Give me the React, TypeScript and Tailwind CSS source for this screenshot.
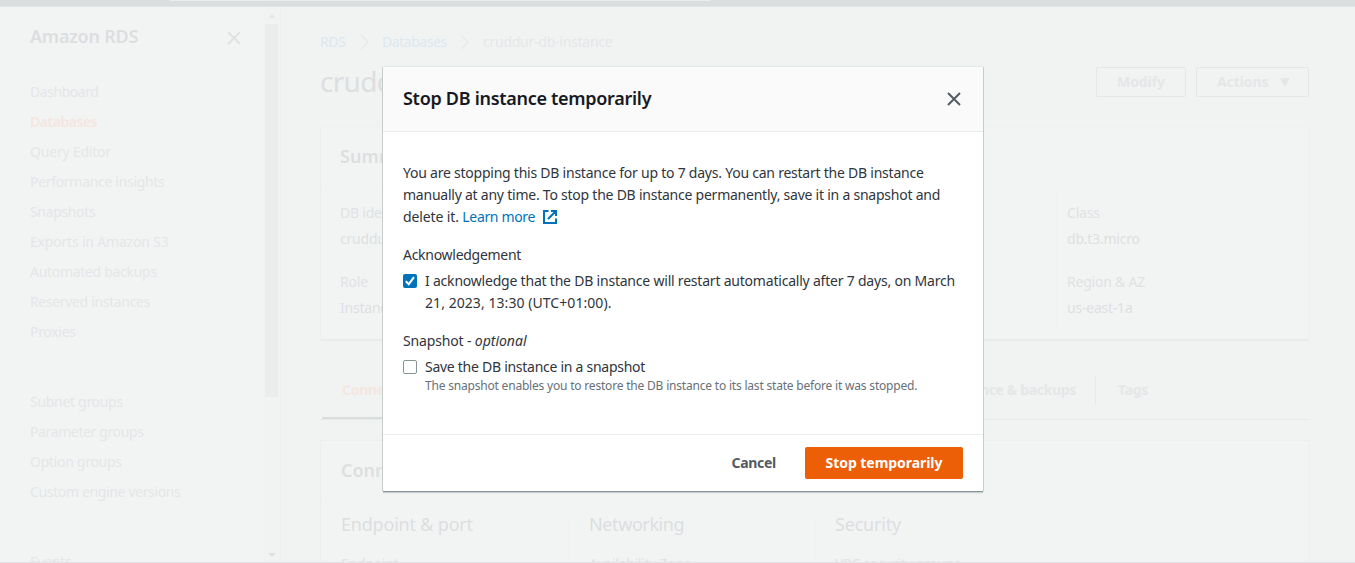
import React from "react";

const NAV_PRIMARY = [
  { label: "Dashboard", className: "tracking-[-0.44px]" },
  { label: "Databases", className: "font-semibold tracking-[-0.45px] text-[#f5e6df]" },
  { label: "Query Editor", className: "tracking-[-0.2px]" },
  { label: "Performance insights", className: "tracking-[-0.31px]" },
  { label: "Snapshots", className: "tracking-[-0.35px]" },
  { label: "Exports in Amazon S3", className: "tracking-[-0.19px]" },
  { label: "Automated backups", className: "tracking-[-0.3px]" },
  { label: "Reserved instances", className: "tracking-[-0.34px]" },
  { label: "Proxies", className: "tracking-[-0.3px]" },
];

const NAV_SECONDARY = [
  { label: "Subnet groups", className: "tracking-[-0.3px]" },
  { label: "Parameter groups", className: "tracking-[-0.38px]" },
  { label: "Option groups", className: "tracking-[-0.3px]" },
  { label: "Custom engine versions", className: "tracking-[-0.36px]" },
];

type NavEntry = { label: string; className: string };

function NavList({ items }: { items: NavEntry[] }) {
  return (
    <ul className="px-[30px]">
      {items.map((item) => (
        <li key={item.label} className={`h-[30px] leading-[30px] whitespace-nowrap ${item.className}`}>
          {item.label}
        </li>
      ))}
    </ul>
  );
}

function CloseIcon({ className }: { className: string }) {
  return (
    <svg viewBox="0 0 14 14" className={className} fill="none" stroke="currentColor" strokeWidth="2">
      <path d="M1 1l12 12M13 1L1 13" />
    </svg>
  );
}

function Chevron() {
  return (
    <svg viewBox="0 0 10 16" className="h-4 w-[10px] shrink-0 text-[#e8eaea]" fill="none" stroke="currentColor" strokeWidth="1.6">
      <path d="M1 1l7 7-7 7" />
    </svg>
  );
}

function Sidebar() {
  return (
    <aside className="flex h-full w-[281px] shrink-0 border-r border-[#edefef] bg-[#f2f4f4] text-sm text-[#e4e6e7]">
      <div className="w-[263px] shrink-0">
        <div className="flex h-[60px] items-center justify-between border-b border-[#f0f2f2] pr-[22px] pl-[30px]">
          <h2 className="-mt-[2px] text-lg leading-6 font-semibold tracking-[-0.25px] text-[#dcdee0]">Amazon RDS</h2>
          <CloseIcon className="mt-[2px] h-[14px] w-[14px] text-[#dfe1e2]" />
        </div>
        <div className="pt-[10px]">
          <NavList items={NAV_PRIMARY} />
        </div>
        <hr className="mx-5 mt-[19px] mb-5 border-[#f0f2f2]" />
        <NavList items={NAV_SECONDARY} />
        <hr className="mx-5 mt-[19px] mb-5 border-[#f0f2f2]" />
        <p className="px-[30px] leading-[30px] tracking-[-0.3px]">Events</p>
      </div>
      <div className="flex w-[17px] flex-col items-center bg-[#f1f3f3] pb-[5px]">
        <svg viewBox="0 0 8 4" className="mt-[7px] h-1 w-2">
          <path d="M0 4l4-4 4 4z" fill="#e6e8e8" />
        </svg>
        <div className="mt-[6px] h-[373px] w-[13px] bg-[#ebeded]" />
        <svg viewBox="0 0 8 4" className="mt-auto h-1 w-2">
          <path d="M0 0l4 4 4-4z" fill="#dddfe0" />
        </svg>
      </div>
    </aside>
  );
}

function Field({ label, value }: { label: string; value: string }) {
  return (
    <div className="h-[69px] leading-[26px] tracking-[-0.22px]">
      <dt>{label}</dt>
      <dd className="text-[#dedfe1]">{value}</dd>
    </div>
  );
}

function Column({ children, className = "" }: { children: React.ReactNode; className?: string }) {
  return <div className={`flex-1 border-l border-[#f0f1f1] ${className}`}>{children}</div>;
}

function Summary() {
  return (
    <section className="mt-[30px] h-[214px] border border-x-[#edefef] border-b-2 border-t-[#eff1f1] border-b-[#e9ebeb] bg-[#f2f4f4]">
      <h2 className="h-[59px] border-b border-[#f0f2f2] px-[19px] text-lg leading-[57px] font-semibold text-[#dcdee0]">
        Summary
      </h2>
      <dl className="mt-[6px] flex h-[135px] text-sm text-[#e0e2e3]">
        <div className="w-[735px] shrink-0 pt-[7px] pl-[19px]">
          <Field label="DB identifier" value="cruddur-db-instance" />
          <Field label="Role" value="Instance" />
        </div>
        <Column className="pt-[7px] pl-[10px]">
          <Field label="Class" value="db.t3.micro" />
          <Field label="Region & AZ" value="us-east-1a" />
        </Column>
      </dl>
    </section>
  );
}

function Tabs() {
  return (
    <nav className="mt-[20px] flex h-[59px] justify-between border-b border-[#e8eaea] text-sm leading-[58px] font-bold whitespace-nowrap text-[#e4e6e7]">
      <div className="ml-[2px] h-[58px] w-[200px] border-b-2 border-[#dadddd] pl-5 tracking-[-0.3px] text-[#f5e6df]">
        Connectivity &amp; security
      </div>
      <div className="flex h-[58px] items-center pr-[161px]">
        <span className="pr-[19px] tracking-[-0.35px]">Maintenance &amp; backups</span>
        <span className="h-[30px] w-px bg-[#e7e9e9]" />
        <span className="pl-[22px] tracking-[-0.3px]">Tags</span>
      </div>
    </nav>
  );
}

function Connectivity() {
  const heading = "text-lg leading-6 tracking-[-0.2px] text-[#dcdee0]";
  const label = "mt-[15px] leading-[26px] tracking-[-0.3px] whitespace-nowrap";
  return (
    <section className="mt-5 h-[160px] border border-[#edefef] bg-[#f2f4f4]">
      <h2 className="h-[59px] border-b border-[#f0f2f2] px-5 text-lg leading-[58px] font-semibold text-[#dcdee0]">
        Connectivity &amp; security
      </h2>
      <div className="mt-4 flex h-[90px] text-sm text-[#e0e2e3]">
        <div className="-mt-1 w-[247px] pl-5">
          <h3 className={heading}>Endpoint &amp; port</h3>
          <p className={label}>Endpoint</p>
        </div>
        <div className="w-[247px] border-l border-[#f0f1f1] pl-5">
          <h3 className="-mt-1 text-lg leading-6 tracking-[-0.4px] text-[#dcdee0]">Networking</h3>
          <p className={label}>Availability Zone</p>
        </div>
        <Column className="pl-[19px]">
          <h3 className={`-mt-1 ${heading}`}>Security</h3>
          <p className={label}>VPC security groups</p>
        </Column>
      </div>
    </section>
  );
}

function MainPage() {
  return (
    <main className="min-w-0 flex-1 pt-[23px] pr-[45px] pl-[39px]">
      <div className="flex h-6 items-center text-sm text-[#e5e7e8]">
        <span className="w-10 tracking-[-0.35px] text-[#dce8ef]">RDS</span>
        <Chevron />
        <span className="ml-3 w-[78px] tracking-[-0.45px] text-[#dce8ef]">Databases</span>
        <Chevron />
        <span className="ml-[13px] tracking-[-0.25px]">cruddur-db-instance</span>
      </div>
      <div className="mt-[13px] flex h-[30px] items-center gap-[10px] text-sm font-bold text-[#e4e6e7]">
        <h1 className="-mt-[3px] mr-auto text-[28px] leading-[30px] font-normal tracking-[-0.7px] text-[#dcdee0]">
          cruddur-db-instance
        </h1>
        <button className="h-[30px] w-[90px] rounded-[2px] border border-[#e4e6e7] tracking-[-0.1px]">Modify</button>
        <button className="flex h-[30px] w-[113px] items-center rounded-[2px] border border-[#e4e6e7] pl-5 tracking-[-0.1px]">
          Actions
          <svg viewBox="0 0 10 9" className="ml-3 h-[9px] w-[10px]">
            <path d="M0 0h10L5 9z" fill="currentColor" />
          </svg>
        </button>
      </div>
      <Summary />
      <Tabs />
      <Connectivity />
    </main>
  );
}

function ExternalIcon() {
  return (
    <svg viewBox="0 0 14 14" className="ml-2 inline-block h-[14px] w-[14px] align-[-2px]" fill="none" stroke="currentColor" strokeWidth="2">
      <path d="M5.5 1H1v12h12V8.5M8 1h5v5M13 1L5 9" />
    </svg>
  );
}

function Dialog() {
  return (
    <div
      role="dialog"
      className="absolute top-[67px] left-[383px] flex h-[424px] w-[600px] flex-col bg-white text-sm leading-[22px] text-[#30353c] shadow-[0_1px_0_0_#879596,1px_0_0_0_#c6cccc,-1px_0_0_0_#c6cccc,0_-1px_0_0_#e6e9e9,0_2px_1px_0_#c9cfcf]"
    >
      <header className="flex h-[65px] items-center justify-between border-b border-[#eaeded] bg-[#fafafa] pr-[22px] pb-[2px] pl-5">
        <h2 className="-mt-px text-lg font-semibold tracking-[-0.29px] whitespace-nowrap text-[#16191f]">
          Stop DB instance temporarily
        </h2>
        <CloseIcon className="mt-[2px] h-[14px] w-[14px] text-[#545b64]" />
      </header>
      <div className="flex-1 px-5 pt-[30px] whitespace-nowrap">
        <p className="tracking-[-0.235px]">
          You are stopping this DB instance for up to 7 days. You can restart the DB instance
          <br />
          manually at any time. To stop the DB instance permanently, save it in a snapshot and
          <br />
          <span className="tracking-[-0.12px]">delete it. </span>
          <a className="text-[#0073bb]">
            <span className="tracking-[-0.35px]">Learn more</span>
            <ExternalIcon />
          </a>
        </p>
        <div className="mt-4 tracking-[-0.28px]">Acknowledgement</div>
        <label className="mt-1 flex">
          <span className="mt-1 mr-2 flex h-[14px] w-[14px] shrink-0 items-center justify-center rounded-[2px] bg-[#0073bb]">
            <svg viewBox="0 0 14 14" className="h-[14px] w-[14px]" fill="none" stroke="white" strokeWidth="2">
              <path d="M2.8 7.2l3 3 5.2-7" />
            </svg>
          </span>
          <span className="tracking-[-0.21px]">
            I acknowledge that the DB instance will restart automatically after 7 days, on March
            <br />
            <span className="tracking-[0.06px]">21, 2023, 13:30 (UTC+01:00).</span>
          </span>
        </label>
        <div className="mt-4 tracking-[-0.15px]">
          Snapshot - <i className="tracking-[-0.02px]">optional</i>
        </div>
        <label className="mt-1 flex">
          <span className="mt-1 mr-2 h-[14px] w-[14px] shrink-0 rounded-[2px] border border-[#879596]" />
          <span>
            <span className="block tracking-[-0.27px]">Save the DB instance in a snapshot</span>
            <span className="block text-xs leading-4 tracking-[-0.195px] text-[#687078]">
              The snapshot enables you to restore the DB instance to its last state before it was stopped.
            </span>
          </span>
        </label>
      </div>
      <footer className="flex h-[57px] items-center justify-end border-t border-[#eaeded] pr-5 font-bold">
        <button className="mr-[29px] tracking-[-0.28px] text-[#545b64]">Cancel</button>
        <button className="h-8 w-[158px] rounded-[2px] bg-[#ec5f07] tracking-[-0.05px] text-white">Stop temporarily</button>
      </footer>
    </div>
  );
}

export default function App() {
  return (
    <div className="relative flex h-[563px] w-[1355px] flex-col overflow-hidden border-b border-[#e0e2e3] bg-[#f1f3f3] font-['Noto_Sans',sans-serif]">
      <div className="h-[7px] shrink-0 border-b border-[#e3e5e5] bg-[#dadede]">
        <div className="ml-[170px] h-px w-[540px] bg-[#eceeee]" />
      </div>
      <div className="flex min-h-0 flex-1">
        <Sidebar />
        <MainPage />
        <div className="w-px bg-transparent" />
      </div>
      <Dialog />
    </div>
  );
}
